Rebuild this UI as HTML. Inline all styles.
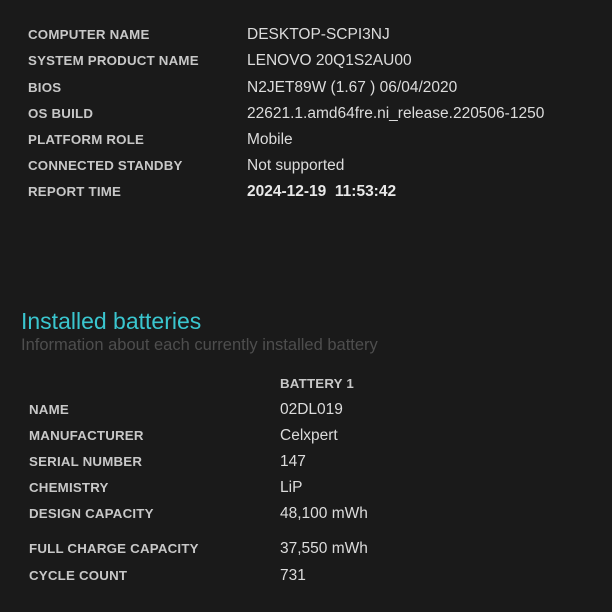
<!DOCTYPE html>
<html><head><style>
body{margin:0;width:612px;height:612px;background:#1a1a1a;position:relative;overflow:hidden;font-family:"Liberation Sans",sans-serif}
.l,.v,.h{position:absolute;white-space:nowrap;line-height:1}
.l{font-weight:bold;font-size:13.3px;color:#c8c8c8;letter-spacing:0.2px}
.v{font-size:15.5px;color:#dcdcdc}
</style></head><body>
<div class="l" style="left:28px;top:28px">COMPUTER NAME</div><div class="v" style="left:247px;top:27px">DESKTOP-SCPI3NJ</div>
<div class="l" style="left:28px;top:54px">SYSTEM PRODUCT NAME</div><div class="v" style="left:247px;top:53px">LENOVO 20Q1S2AU00</div>
<div class="l" style="left:28px;top:81px">BIOS</div><div class="v" style="left:247px;top:80px">N2JET89W (1.67 ) 06/04/2020</div>
<div class="l" style="left:28px;top:107px">OS BUILD</div><div class="v" style="left:247px;top:106px">22621.1.amd64fre.ni_release.220506-1250</div>
<div class="l" style="left:28px;top:133px">PLATFORM ROLE</div><div class="v" style="left:247px;top:132px">Mobile</div>
<div class="l" style="left:28px;top:159px">CONNECTED STANDBY</div><div class="v" style="left:247px;top:158px">Not supported</div>
<div class="l" style="left:28px;top:185px">REPORT TIME</div><div class="v" style="left:247px;top:184px;font-weight:bold;color:#e8e8e8">2024-12-19&nbsp; 11:53:42</div>
<div class="h" style="left:21px;top:310px;font-size:23px;color:#3ac6cf">Installed batteries</div>
<div class="h" style="left:21px;top:337px;font-size:16.5px;color:#4e4e4e">Information about each currently installed battery</div>
<div class="l" style="left:280px;top:377px">BATTERY 1</div>
<div class="l" style="left:29px;top:403px">NAME</div><div class="v" style="left:280px;top:402px">02DL019</div>
<div class="l" style="left:29px;top:429px">MANUFACTURER</div><div class="v" style="left:280px;top:428px">Celxpert</div>
<div class="l" style="left:29px;top:455px">SERIAL NUMBER</div><div class="v" style="left:280px;top:454px">147</div>
<div class="l" style="left:29px;top:481px">CHEMISTRY</div><div class="v" style="left:280px;top:480px">LiP</div>
<div class="l" style="left:29px;top:507px">DESIGN CAPACITY</div><div class="v" style="left:280px;top:506px">48,100 mWh</div>
<div class="l" style="left:29px;top:542px">FULL CHARGE CAPACITY</div><div class="v" style="left:280px;top:541px">37,550 mWh</div>
<div class="l" style="left:29px;top:569px">CYCLE COUNT</div><div class="v" style="left:280px;top:568px">731</div>
</body></html>
